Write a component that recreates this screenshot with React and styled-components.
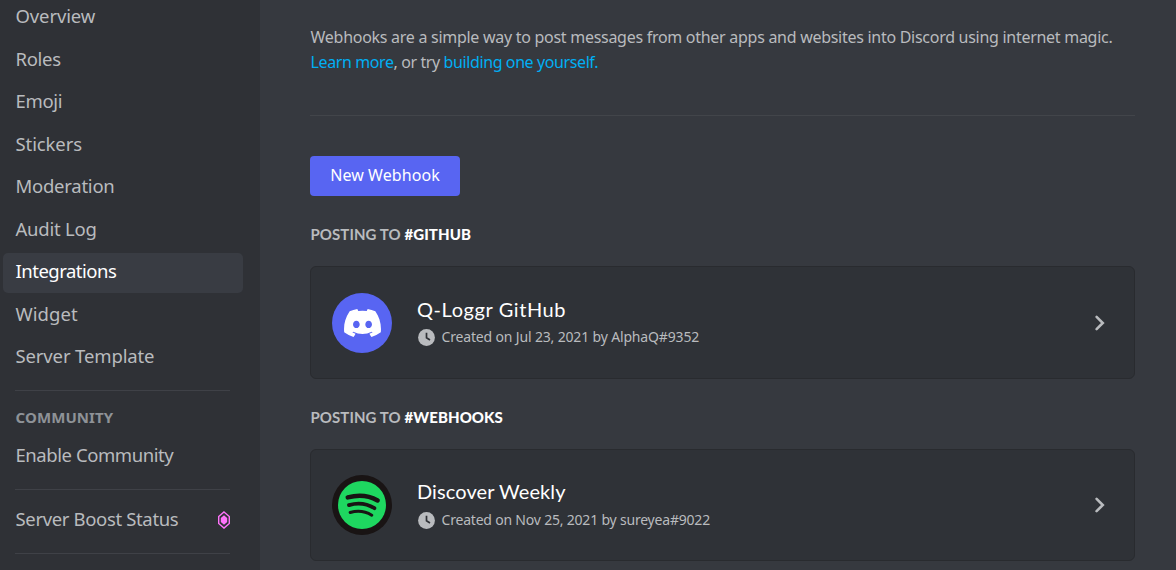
import React from "react";
import styled, { createGlobalStyle } from "styled-components";

const GlobalStyle = createGlobalStyle`
  * { box-sizing: border-box; }
  body {
    margin: 0;
    overflow: hidden;
    background: #36393f;
    color: #b9bbbe;
    font-family: "Noto Sans", sans-serif;
  }
`;

const Page = styled.div`
  display: flex;
  width: 1176px;
  height: 570px;
  overflow: hidden;
`;

const Sidebar = styled.nav`
  flex: 0 0 260px;
  background: #2f3136;
  padding: 0 17px 0 3px;
`;

const NavGroup = styled.div`
  display: flex;
  flex-direction: column;
  gap: 2.5px;
  margin-top: ${(p) => p.$top}px;
`;

const NavItem = styled.div`
  display: flex;
  align-items: center;
  justify-content: space-between;
  height: 40px;
  padding: 0 13px 4px 12.5px;
  border-radius: 5px;
  font-size: 18.5px;
  line-height: 24px;
  letter-spacing: ${(p) => p.$spacing || 0}px;
  color: ${(p) => (p.$active ? "#fff" : "#b9bbbe")};
  background: ${(p) => (p.$active ? "#393c43" : "transparent")};
  white-space: nowrap;

  svg {
    margin-top: 2px;
  }
`;

const NavDivider = styled.div`
  height: 1px;
  margin: ${(p) => p.$top}px 13px 0 12px;
  background: #3f4147;
`;

const NavHeading = styled.div`
  margin-top: 16px;
  padding-left: 12.5px;
  font-size: 15px;
  font-weight: 700;
  line-height: 20px;
  letter-spacing: 0.1px;
  color: #8e9297;
`;

const Main = styled.main`
  flex: 1;
  padding: 25px 41px 0 50px;
`;

const Intro = styled.p`
  margin: 0;
  padding-left: 0.6px;
  font-size: 16px;
  line-height: 25px;
  letter-spacing: ${(p) => p.$spacing}px;
  white-space: nowrap;
`;

const Link = styled.span`
  color: #00aff4;
`;

const Divider = styled.div`
  height: 1px;
  margin: 40px 0;
  background: #42454a;
`;

const Button = styled.button`
  display: block;
  width: 150px;
  height: 40px;
  padding: 0 0 2px;
  border: 0;
  border-radius: 4px;
  background: #5865f2;
  color: #fff;
  font: 400 16px/22px "Noto Sans", sans-serif;
  letter-spacing: 0.08px;
`;

const ChannelHeading = styled.h2`
  margin: 28px 0 22px;
  padding-left: 0.5px;
  font: 700 15px/20px Lato, sans-serif;
  color: #b9bbbe;
  letter-spacing: 0.08px;

  strong {
    color: #fff;
  }
`;

const Card = styled.section`
  display: flex;
  align-items: center;
  height: ${(p) => p.$height}px;
  padding: 0 24px 0 21px;
  border: 1px solid #292b2f;
  border-radius: 6px;
  background: #2f3237;
`;

const Avatar = styled.div`
  display: flex;
  align-items: center;
  justify-content: center;
  width: 60px;
  height: 60px;
  border-radius: 50%;
  background: ${(p) => p.$bg};
`;

const Details = styled.div`
  flex: 1;
  padding-left: 25px;
`;

const Title = styled.div`
  font: 400 20px/26px Lato, sans-serif;
  letter-spacing: ${(p) => p.$spacing}px;
  color: #fff;
`;

const Meta = styled.div`
  display: flex;
  align-items: center;
  gap: 6.5px;
  height: 24px;
  padding-left: 1px;
  margin-top: ${(p) => p.$top}px;
  font-size: 14px;
  line-height: 20px;
  letter-spacing: ${(p) => p.$spacing}px;

  span {
    padding-bottom: 1px;
  }
`;

const Icon = styled.svg`
  display: block;
  flex: none;
`;

const DiscordLogo = () => (
  <Icon width="37" height="28" viewBox="0 0 127.14 96.36">
    <path
      fill="#fff"
      d="M107.7 8.07A105.15 105.15 0 0 0 81.47 0a72.06 72.06 0 0 0-3.36 6.83 97.68 97.68 0 0 0-29.11 0A72.37 72.37 0 0 0 45.64 0a105.89 105.89 0 0 0-26.25 8.09C2.79 32.65-1.71 56.6.54 80.21a105.73 105.73 0 0 0 32.17 16.15 77.7 77.7 0 0 0 6.89-11.11 68.42 68.42 0 0 1-10.85-5.18c.91-.66 1.8-1.34 2.66-2a75.57 75.57 0 0 0 64.32 0c.87.71 1.76 1.39 2.66 2a68.68 68.68 0 0 1-10.87 5.19 77 77 0 0 0 6.89 11.1 105.25 105.25 0 0 0 32.19-16.14c2.64-27.38-4.51-51.11-18.9-72.15ZM42.45 65.69C36.18 65.69 31 60 31 53s5-12.74 11.43-12.74S54 46 53.89 53s-5.05 12.69-11.44 12.69Zm42.24 0C78.41 65.69 73.25 60 73.25 53s5-12.74 11.44-12.74S96.23 46 96.12 53s-5.04 12.69-11.43 12.69Z"
    />
  </Icon>
);

const SpotifyLogo = () => (
  <Icon width="60" height="60" viewBox="0 0 60 60">
    <circle cx="30" cy="30" r="24" fill="#1ed760" />
    <g fill="none" stroke="#191414" strokeLinecap="round">
      <path d="M15.8 22.4C25.5 19.7 37 20.6 45.6 25.4" strokeWidth="4.6" />
      <path d="M17 30.1C25.5 27.6 35 28.7 42.4 33.2" strokeWidth="3.8" />
      <path d="M18.2 37.4C25.5 35.4 33.5 36.3 39.7 40.2" strokeWidth="3.1" />
    </g>
  </Icon>
);

const ClockIcon = () => (
  <Icon width="17" height="17" viewBox="0 0 17 17">
    <circle cx="8.5" cy="8.5" r="8.4" fill="#b9bbbe" />
    <path d="M8.5 3.8V8.8L12 11" fill="none" stroke="#2f3136" strokeWidth="1.7" />
  </Icon>
);

const ChevronIcon = () => (
  <Icon width="20" height="20" viewBox="0 0 20 20">
    <path d="M6.6 3.8L12.8 10L6.6 16.2" fill="none" stroke="#b9bbbe" strokeWidth="2.6" strokeLinecap="round" />
  </Icon>
);

const BoostIcon = () => (
  <Icon width="12" height="18" viewBox="0 0 12 18">
    <path d="M6 .9L11.3 5.6V12.4L6 17.1L.7 12.4V5.6Z" fill="none" stroke="#ff73fa" strokeWidth="1.4" />
    <path d="M6 4.2L9.2 7V11L6 13.8L2.8 11V7Z" fill="#ff73fa" />
  </Icon>
);

const serverPages = [
  { name: "Overview", spacing: -0.12 },
  { name: "Roles", spacing: -0.3 },
  { name: "Emoji", spacing: -0.35 },
  { name: "Stickers", spacing: -0.1 },
  { name: "Moderation", spacing: -0.25 },
  { name: "Audit Log", spacing: -0.22 },
  { name: "Integrations", spacing: -0.5, active: true },
  { name: "Widget", spacing: 0.05 },
  { name: "Server Template", spacing: -0.13 },
];

const webhooks = [
  {
    channel: "#GITHUB",
    name: "Q-Loggr GitHub",
    meta: "Created on Jul 23, 2021 by AlphaQ#9352",
    logo: <DiscordLogo />,
    bg: "#5865f2",
    height: 113,
    spacing: 0.58,
    metaTop: 3,
    metaSpacing: -0.16,
  },
  {
    channel: "#WEBHOOKS",
    name: "Discover Weekly",
    meta: "Created on Nov 25, 2021 by sureyea#9022",
    logo: <SpotifyLogo />,
    bg: "#191414",
    height: 112,
    spacing: 0.1,
    metaTop: 4,
    metaSpacing: -0.2,
  },
];

export default function App() {
  return (
    <Page>
      <GlobalStyle />
      <Sidebar>
        <NavGroup $top={-2}>
          {serverPages.map((p) => (
            <NavItem key={p.name} $active={p.active} $spacing={p.spacing}>
              {p.name}
            </NavItem>
          ))}
        </NavGroup>
        <NavDivider $top={12} />
        <NavHeading>COMMUNITY</NavHeading>
        <NavGroup $top={10}>
          <NavItem $spacing={-0.43}>Enable Community</NavItem>
        </NavGroup>
        <NavDivider $top={12} />
        <NavGroup $top={11}>
          <NavItem $spacing={-0.35}>
            Server Boost Status
            <BoostIcon />
          </NavItem>
        </NavGroup>
        <NavDivider $top={12} />
      </Sidebar>
      <Main>
        <Intro $spacing={-0.28}>
          Webhooks are a simple way to post messages from other apps and websites into Discord using internet magic.
        </Intro>
        <Intro $spacing={-0.4}>
          <Link>Learn more</Link>, or try <Link>building one yourself.</Link>
        </Intro>
        <Divider />
        <Button>New Webhook</Button>
        {webhooks.map((w) => (
          <React.Fragment key={w.channel}>
            <ChannelHeading>
              POSTING TO <strong>{w.channel}</strong>
            </ChannelHeading>
            <Card $height={w.height}>
              <Avatar $bg={w.bg}>{w.logo}</Avatar>
              <Details>
                <Title $spacing={w.spacing}>{w.name}</Title>
                <Meta $top={w.metaTop} $spacing={w.metaSpacing}>
                  <ClockIcon />
                  <span>{w.meta}</span>
                </Meta>
              </Details>
              <ChevronIcon />
            </Card>
          </React.Fragment>
        ))}
      </Main>
    </Page>
  );
}
